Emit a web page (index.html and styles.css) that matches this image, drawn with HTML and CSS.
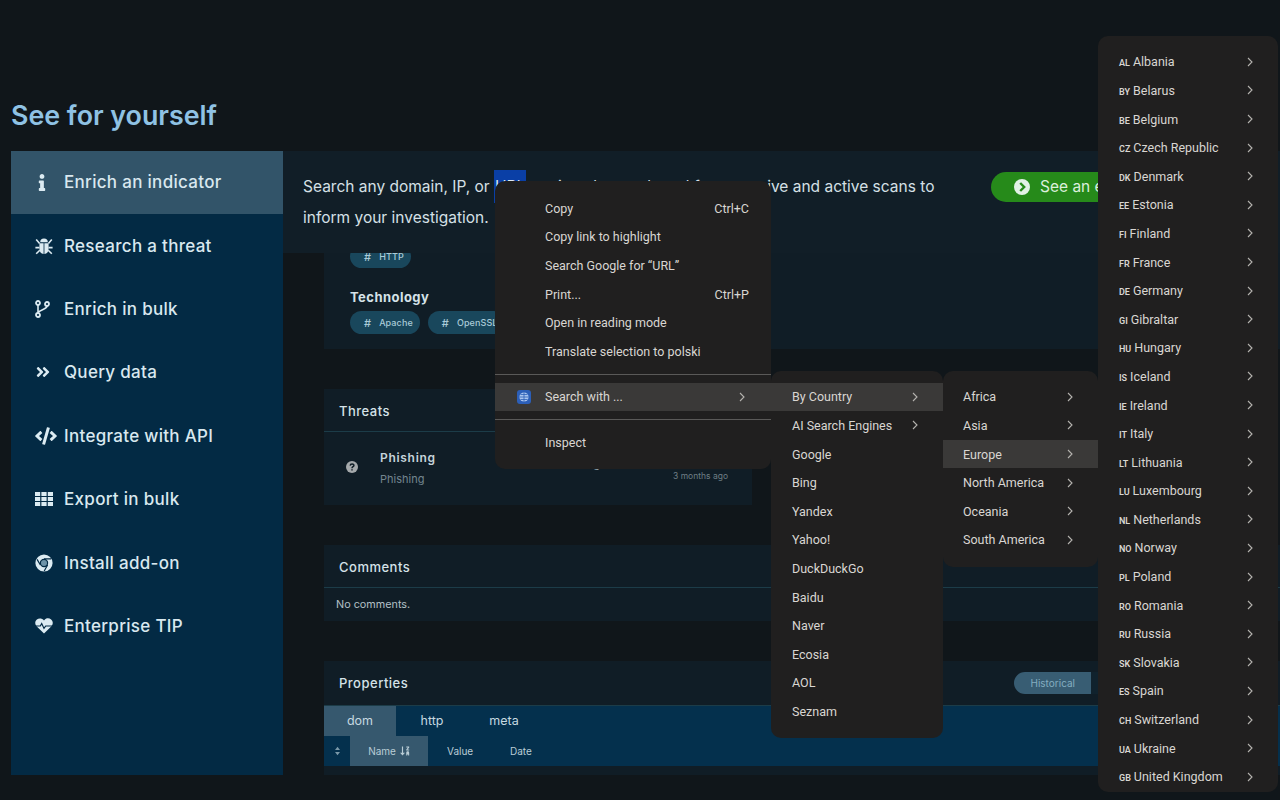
FILE: index.html
```html
<!DOCTYPE html>
<html lang="en">
<head>
  <meta charset="UTF-8">
  <meta name="viewport" content="width=device-width, initial-scale=1.0">
  <title>See for yourself</title>
  <link rel="stylesheet" href="styles.css">
</head>
<body>
  <div class="page">
    <h1 class="page-title">See for yourself</h1>

    <div class="explore">
      <nav class="side-nav">
        <a class="side-item active">
          <span class="side-icon"><svg class="ic-info" viewBox="0 0 192 512"><path d="M20 424.2h20V279.8H20c-11 0-20-9-20-20V212c0-11 9-20 20-20h112c11 0 20 9 20 20v212.2h20c11 0 20 9 20 20V492c0 11-9 20-20 20H20c-11 0-20-9-20-20v-47.8c0-11 9-20 20-20zM96 0C56.2 0 24 32.2 24 72s32.2 72 72 72 72-32.2 72-72S135.8 0 96 0z"/></svg></span>
          Enrich an indicator
        </a>
        <a class="side-item">
          <span class="side-icon"><svg class="ic-wide" viewBox="0 0 18 18"><path d="M5.2 5.2a3.8 3.6 0 0 1 7.6 0z"/><path d="M4.4 6.2h4.2V17C6 16.8 4.4 14.6 4.4 12zM9.4 6.2h4.2V12c0 2.6-1.6 4.8-4.2 5z"/><path class="ic-line" d="M1.2 2.6l3.4 4M16.8 2.6l-3.4 4M.4 10.6h4M17.6 10.6h-4M1.2 16.8l3.6-3.6M16.8 16.8l-3.6-3.6"/></svg></span>
          Research a threat
        </a>
        <a class="side-item">
          <span class="side-icon"><svg class="ic-branch" viewBox="0 0 15 18"><circle class="ic-ring" cx="3" cy="3" r="2"/><circle class="ic-ring" cx="3" cy="15" r="2"/><circle class="ic-ring" cx="12" cy="4" r="2"/><path class="ic-line" d="M3 5v8M12 6c0 3.4-6.4 3-9 6.5"/></svg></span>
          Enrich in bulk
        </a>
        <a class="side-item">
          <span class="side-icon"><svg class="ic-angles" viewBox="0 0 448 512"><path d="M224.3 273l-136 136c-9.4 9.4-24.6 9.4-33.9 0l-22.6-22.6c-9.4-9.4-9.4-24.6 0-33.9l96.4-96.4-96.4-96.4c-9.4-9.4-9.4-24.6 0-33.9L54.3 103c9.4-9.4 24.6-9.4 33.9 0l136 136c9.5 9.4 9.5 24.6.1 34zm192-34l-136-136c-9.4-9.4-24.6-9.4-33.9 0l-22.6 22.6c-9.4 9.4-9.4 24.6 0 33.9l96.4 96.4-96.4 96.4c-9.4 9.4-9.4 24.6 0 33.9l22.6 22.6c9.4 9.4 24.6 9.4 33.9 0l136-136c9.4-9.2 9.4-24.4 0-33.8z"/></svg></span>
          Query data
        </a>
        <a class="side-item">
          <span class="side-icon"><svg class="ic-code" viewBox="0 0 640 512"><path d="M278.9 511.5l-61-17.7c-6.4-1.8-10-8.5-8.2-14.9L346.2 8.7c1.8-6.4 8.5-10 14.9-8.2l61 17.7c6.4 1.8 10 8.5 8.2 14.9L293.8 503.3c-1.9 6.4-8.5 10.1-14.9 8.2zm-114-112.2l43.5-46.4c4.6-4.9 4.3-12.7-.8-17.2L117 256l90.6-79.7c5.1-4.5 5.5-12.3.8-17.2l-43.5-46.4c-4.5-4.8-12.1-5.1-17-.5L3.8 247.2c-5.1 4.7-5.1 12.8 0 17.5l144.1 135.1c4.9 4.6 12.5 4.4 17-.5zm327.2.6l144.1-135.1c5.1-4.7 5.1-12.8 0-17.5L492.1 112.1c-4.8-4.5-12.4-4.3-17 .5L431.6 159c-4.6 4.9-4.3 12.7.8 17.2L523 256l-90.6 79.7c-5.1 4.5-5.5 12.3-.8 17.2l43.5 46.4c4.5 4.9 12.1 5.1 17 .6z"/></svg></span>
          Integrate with API
        </a>
        <a class="side-item">
          <span class="side-icon"><svg class="ic-wide" viewBox="0 0 18 14"><path d="M0 0h5.2v4H0zM6.4 0h5.2v4H6.4zM12.8 0H18v4h-5.2zM0 5h5.2v4H0zM6.4 5h5.2v4H6.4zM12.8 5H18v4h-5.2zM0 10h5.2v4H0zM6.4 10h5.2v4H6.4zM12.8 10H18v4h-5.2z"/></svg></span>
          Export in bulk
        </a>
        <a class="side-item">
          <span class="side-icon"><svg class="ic-wide" viewBox="0 0 18 18"><circle cx="9" cy="9" r="8.6"/><circle class="ic-cut" cx="9" cy="9" r="3.6"/><path class="ic-cut" d="M9 4.9h7M5.4 11l-3.3-5.6M12.6 11l-3.4 6"/></svg></span>
          Install add-on
        </a>
        <a class="side-item">
          <span class="side-icon"><svg class="ic-wide" viewBox="0 0 18 16"><path d="M9 15.6L1.8 8.6C-.4 6.3-.2 3 1.900 1.400 4 -.2 7 .1 9 2.400 11-.1 14-.2 16.100 1.400c2.100 1.600 2.300 4.900.1 7.200z"/><path class="ic-cut" d="M0 8h5.300l1.400-2.400 2.300 4.800 1.700-2.400H18"/></svg></span>
          Enterprise TIP
        </a>
      </nav>

      <div class="explore-body">
        <div class="intro">
          <p class="intro-text">Search any domain, IP, or <span class="selected">URL</span> to view data gathered from passive and active scans to<br>inform your investigation.</p>
          <a class="cta">
            <svg class="cta-icon" viewBox="0 0 16 16"><circle cx="8" cy="8" r="8"/><path class="cta-mark" d="M6.200 4l4 4-4 4"/></svg>
            <span>See an example</span>
          </a>
        </div>

        <div class="preview">
          <section class="card card-tags">
            <div class="chips chips-cut"><span class="chip"><i>#</i>HTTP</span></div>
            <h3 class="tag-heading">Technology</h3>
            <div class="chips"><span class="chip"><i>#</i>Apache</span><span class="chip"><i>#</i>OpenSSL</span></div>
          </section>

          <section class="card card-threats">
            <h2 class="card-title">Threats</h2>
            <div class="threat-row">
              <svg class="threat-icon" viewBox="0 0 12 12"><circle cx="6" cy="6" r="6"/><path class="threat-mark" d="M4.200 4.600C4.300 2.400 8 2.500 7.900 4.500 7.900 5.800 6 5.700 6 7.200M6 8.300v1.300"/></svg>
              <div class="threat-text">
                <div class="threat-name">Phishing</div>
                <div class="threat-sub">Phishing</div>
              </div>
              <span class="threat-mid">Phishing</span>
              <span class="threat-time">3 months ago</span>
            </div>
          </section>

          <section class="card card-comments">
            <h2 class="card-title">Comments</h2>
            <p class="no-comments">No comments.</p>
          </section>

          <section class="card card-props">
            <div class="props-head">
              <h2 class="card-title">Properties</h2>
              <div class="toggle"><span class="toggle-on">Historical</span><span class="toggle-off"></span></div>
            </div>
            <div class="props-tabs">
              <span class="props-tab active">dom</span>
              <span class="props-tab">http</span>
              <span class="props-tab">meta</span>
            </div>
            <div class="props-cols">
              <span class="col-sort"><svg viewBox="0 0 8 12"><path d="M4 1l3 3.800H1zM4 11L1 7.200h6z"/></svg></span>
              <span class="col col-name active">Name
                <svg class="az" viewBox="0 0 12 11"><path d="M2.300 0h1.400v7.500H6L3 11 0 7.500h2.300z"/><path d="M7.500 0h3.500v1.500L9 3.600h2V5H7.500V3.600L9.500 1.400h-2zM7.500 11V7.500C7.500 5.400 11 5.400 11 7.500V11H9.800V9.800H8.700V11z"/></svg>
              </span>
              <span class="col col-value">Value</span>
              <span class="col col-date">Date</span>
            </div>
          </section>
        </div>
      </div>
    </div>
  </div>

  <!-- right click menu and its open submenus -->
  <div class="menu menu-main">
    <div class="menu-row"><span>Copy</span><kbd>Ctrl+C</kbd></div>
    <div class="menu-row"><span>Copy link to highlight</span></div>
    <div class="menu-row"><span>Search Google for “URL”</span></div>
    <div class="menu-row"><span>Print...</span><kbd>Ctrl+P</kbd></div>
    <div class="menu-row"><span>Open in reading mode</span></div>
    <div class="menu-row"><span>Translate selection to polski</span></div>
    <hr class="menu-sep">
    <div class="menu-row open">
      <svg class="ext-icon" viewBox="0 0 14 14"><rect width="14" height="14" rx="3"/><circle class="ext-globe" cx="7" cy="7" r="4.600"/><path class="ext-line" d="M2.400 7h9.200M7 2.400v9.200M3.500 4.500h7M3.500 9.500h7"/></svg>
      <span>Search with ...</span><svg class="chev" viewBox="0 0 6 10"><path d="M1 1l4 4-4 4"/></svg>
    </div>
    <hr class="menu-sep">
    <div class="menu-row"><span>Inspect</span></div>
  </div>

  <div class="menu menu-search">
    <div class="menu-row open"><span>By Country</span><svg class="chev" viewBox="0 0 6 10"><path d="M1 1l4 4-4 4"/></svg></div>
    <div class="menu-row"><span>AI Search Engines</span><svg class="chev" viewBox="0 0 6 10"><path d="M1 1l4 4-4 4"/></svg></div>
    <div class="menu-row"><span>Google</span></div>
    <div class="menu-row"><span>Bing</span></div>
    <div class="menu-row"><span>Yandex</span></div>
    <div class="menu-row"><span>Yahoo!</span></div>
    <div class="menu-row"><span>DuckDuckGo</span></div>
    <div class="menu-row"><span>Baidu</span></div>
    <div class="menu-row"><span>Naver</span></div>
    <div class="menu-row"><span>Ecosia</span></div>
    <div class="menu-row"><span>AOL</span></div>
    <div class="menu-row"><span>Seznam</span></div>
  </div>

  <div class="menu menu-regions">
    <div class="menu-row"><span>Africa</span><svg class="chev" viewBox="0 0 6 10"><path d="M1 1l4 4-4 4"/></svg></div>
    <div class="menu-row"><span>Asia</span><svg class="chev" viewBox="0 0 6 10"><path d="M1 1l4 4-4 4"/></svg></div>
    <div class="menu-row open"><span>Europe</span><svg class="chev" viewBox="0 0 6 10"><path d="M1 1l4 4-4 4"/></svg></div>
    <div class="menu-row"><span>North America</span><svg class="chev" viewBox="0 0 6 10"><path d="M1 1l4 4-4 4"/></svg></div>
    <div class="menu-row"><span>Oceania</span><svg class="chev" viewBox="0 0 6 10"><path d="M1 1l4 4-4 4"/></svg></div>
    <div class="menu-row"><span>South America</span><svg class="chev" viewBox="0 0 6 10"><path d="M1 1l4 4-4 4"/></svg></div>
  </div>

  <div class="menu menu-countries">
    <div class="menu-row"><span><b>AL</b>Albania</span><svg class="chev" viewBox="0 0 6 10"><path d="M1 1l4 4-4 4"/></svg></div>
    <div class="menu-row"><span><b>BY</b>Belarus</span><svg class="chev" viewBox="0 0 6 10"><path d="M1 1l4 4-4 4"/></svg></div>
    <div class="menu-row"><span><b>BE</b>Belgium</span><svg class="chev" viewBox="0 0 6 10"><path d="M1 1l4 4-4 4"/></svg></div>
    <div class="menu-row"><span><b>CZ</b>Czech Republic</span><svg class="chev" viewBox="0 0 6 10"><path d="M1 1l4 4-4 4"/></svg></div>
    <div class="menu-row"><span><b>DK</b>Denmark</span><svg class="chev" viewBox="0 0 6 10"><path d="M1 1l4 4-4 4"/></svg></div>
    <div class="menu-row"><span><b>EE</b>Estonia</span><svg class="chev" viewBox="0 0 6 10"><path d="M1 1l4 4-4 4"/></svg></div>
    <div class="menu-row"><span><b>FI</b>Finland</span><svg class="chev" viewBox="0 0 6 10"><path d="M1 1l4 4-4 4"/></svg></div>
    <div class="menu-row"><span><b>FR</b>France</span><svg class="chev" viewBox="0 0 6 10"><path d="M1 1l4 4-4 4"/></svg></div>
    <div class="menu-row"><span><b>DE</b>Germany</span><svg class="chev" viewBox="0 0 6 10"><path d="M1 1l4 4-4 4"/></svg></div>
    <div class="menu-row"><span><b>GI</b>Gibraltar</span><svg class="chev" viewBox="0 0 6 10"><path d="M1 1l4 4-4 4"/></svg></div>
    <div class="menu-row"><span><b>HU</b>Hungary</span><svg class="chev" viewBox="0 0 6 10"><path d="M1 1l4 4-4 4"/></svg></div>
    <div class="menu-row"><span><b>IS</b>Iceland</span><svg class="chev" viewBox="0 0 6 10"><path d="M1 1l4 4-4 4"/></svg></div>
    <div class="menu-row"><span><b>IE</b>Ireland</span><svg class="chev" viewBox="0 0 6 10"><path d="M1 1l4 4-4 4"/></svg></div>
    <div class="menu-row"><span><b>IT</b>Italy</span><svg class="chev" viewBox="0 0 6 10"><path d="M1 1l4 4-4 4"/></svg></div>
    <div class="menu-row"><span><b>LT</b>Lithuania</span><svg class="chev" viewBox="0 0 6 10"><path d="M1 1l4 4-4 4"/></svg></div>
    <div class="menu-row"><span><b>LU</b>Luxembourg</span><svg class="chev" viewBox="0 0 6 10"><path d="M1 1l4 4-4 4"/></svg></div>
    <div class="menu-row"><span><b>NL</b>Netherlands</span><svg class="chev" viewBox="0 0 6 10"><path d="M1 1l4 4-4 4"/></svg></div>
    <div class="menu-row"><span><b>NO</b>Norway</span><svg class="chev" viewBox="0 0 6 10"><path d="M1 1l4 4-4 4"/></svg></div>
    <div class="menu-row"><span><b>PL</b>Poland</span><svg class="chev" viewBox="0 0 6 10"><path d="M1 1l4 4-4 4"/></svg></div>
    <div class="menu-row"><span><b>RO</b>Romania</span><svg class="chev" viewBox="0 0 6 10"><path d="M1 1l4 4-4 4"/></svg></div>
    <div class="menu-row"><span><b>RU</b>Russia</span><svg class="chev" viewBox="0 0 6 10"><path d="M1 1l4 4-4 4"/></svg></div>
    <div class="menu-row"><span><b>SK</b>Slovakia</span><svg class="chev" viewBox="0 0 6 10"><path d="M1 1l4 4-4 4"/></svg></div>
    <div class="menu-row"><span><b>ES</b>Spain</span><svg class="chev" viewBox="0 0 6 10"><path d="M1 1l4 4-4 4"/></svg></div>
    <div class="menu-row"><span><b>CH</b>Switzerland</span><svg class="chev" viewBox="0 0 6 10"><path d="M1 1l4 4-4 4"/></svg></div>
    <div class="menu-row"><span><b>UA</b>Ukraine</span><svg class="chev" viewBox="0 0 6 10"><path d="M1 1l4 4-4 4"/></svg></div>
    <div class="menu-row"><span><b>GB</b>United Kingdom</span><svg class="chev" viewBox="0 0 6 10"><path d="M1 1l4 4-4 4"/></svg></div>
  </div>
</body>
</html>
```

FILE: styles.css
```css
html, body {
  height: 100%;
}

body {
  margin: 0;
  background: #10161a;
  color: #dfe9ee;
  font-family: Inter, "Noto Sans", sans-serif;
  overflow: hidden;
}

.page {
  height: 800px;
  padding: 99px 0 0 11px;
  box-sizing: border-box;
  overflow: hidden;
}

.page-title {
  margin: 0 0 20px;
  font-size: 26.8px;
  line-height: 32px;
  font-weight: 600;
  color: #8fc2e4;
}

.explore {
  display: flex;
  height: 624px;
}

/* left nav */
.side-nav {
  width: 272px;
  flex-shrink: 0;
  background: #032a44;
}

.side-item {
  display: flex;
  align-items: center;
  height: 63.4px;
  padding: 0 0 1px 24px;
  box-sizing: border-box;
  font-size: 17px;
  font-weight: 500;
  letter-spacing: 0.3px;
  color: #d9e8ef;
}

.side-item.active {
  background: #325469;
}

.side-icon {
  display: flex;
  align-items: center;
  width: 29px;
  flex-shrink: 0;
}

.side-icon svg {
  fill: #dcebf2;
  display: block;
}

.ic-info {
  width: 8px;
  height: 17px;
  margin-left: 3px;
}

.ic-wide {
  width: 18px;
  height: 18px;
}

.ic-branch {
  width: 15px;
  height: 18px;
}

.ic-angles {
  width: 14px;
  height: 16px;
  margin-left: 1px;
}

.ic-code {
  width: 22px;
  height: 18px;
}

.ic-line {
  fill: none;
  stroke: #dcebf2;
  stroke-width: 1.6;
}

.side-icon .ic-ring {
  fill: none;
  stroke: #dcebf2;
  stroke-width: 1.8;
}

.side-icon .ic-cut {
  fill: #6d93a8;
  stroke: #032a44;
  stroke-width: 1.2;
}

.side-icon path.ic-cut {
  fill: none;
}

/* main area */
.explore-body {
  flex: 1;
  min-width: 0;
}

.intro {
  display: flex;
  align-items: flex-start;
  height: 102px;
  padding: 20px 0 0 20px;
  box-sizing: border-box;
  background: #111e27;
}

.intro-text {
  width: 640px;
  margin: 0;
  font-size: 15.5px;
  line-height: 31px;
  color: #d5e0e6;
  white-space: nowrap;
}

.selected {
  padding: 7px 1px;
  background: #0a3fa6;
  color: #dfe9ee;
}

.cta {
  display: flex;
  align-items: center;
  gap: 10px;
  height: 30px;
  margin: 1px 0 0 48px;
  padding: 0 22px 1px 23px;
  box-sizing: border-box;
  border-radius: 15px;
  background: #268a1a;
  color: #dcefdc;
  font-size: 15.5px;
  white-space: nowrap;
}

.cta-icon {
  width: 16px;
  height: 16px;
  fill: #e2f1e6;
}

.cta-mark {
  fill: none;
  stroke: #268a1a;
  stroke-width: 2.4;
}

.preview {
  height: 522px;
  padding-left: 41px;
  overflow: hidden;
}

.card {
  display: flow-root;
  background: #101d26;
  margin-bottom: 40px;
}

.card-tags {
  height: 96px;
  padding-left: 26px;
  box-sizing: border-box;
}

.chips {
  display: flex;
  gap: 8px;
}

.chips-cut {
  margin-top: -8px;
}

.chip {
  display: flex;
  align-items: center;
  height: 23px;
  padding: 0 7px 0 10px;
  border-radius: 12px;
  background: #19475c;
  color: #a9cbd8;
  font-size: 9px;
  letter-spacing: 0.1px;
  font-weight: 500;
}

.chip i {
  font-style: normal;
  margin: 0 8px 0 4px;
  font-size: 11px;
}

.tag-heading {
  margin: 21px 0 6px;
  font-size: 13px;
  line-height: 16px;
  font-weight: 700;
  letter-spacing: 0.45px;
  color: #d5e2e8;
}

.card-title {
  margin: 0;
  font-size: 13px;
  line-height: 16px;
  font-weight: 500;
  letter-spacing: 0.5px;
  color: #d5e2e8;
}

.card-threats {
  width: 428px;
  height: 116px;
}

.card-threats .card-title,
.card-comments .card-title {
  height: 43px;
  padding: 14px 0 0 15px;
  box-sizing: border-box;
  border-bottom: 1px solid #1c3c48;
}

.threat-row {
  display: flex;
  align-items: center;
  height: 72px;
  padding: 0 24px 0 22px;
  box-sizing: border-box;
}

.threat-icon {
  width: 12px;
  height: 12px;
  fill: #a5a9ab;
  margin: -3px 0 0 0;
}

.threat-mark {
  fill: none;
  stroke: #101d26;
  stroke-width: 1.5;
}

.threat-text {
  width: 226px;
  margin-left: 22px;
}

.threat-name {
  font-size: 12px;
  font-weight: 600;
  line-height: 16px;
  letter-spacing: 0.7px;
  margin-bottom: 6px;
  color: #c5d3da;
}

.threat-sub {
  font-size: 11px;
  line-height: 14px;
  color: #73858f;
}

.threat-mid {
  margin: -8px 0 0 -16px;
  font-size: 11px;
  width: 10px;
  overflow: hidden;
  direction: rtl;
  color: #9eabb2;
}

.threat-time {
  margin: 16px 0 0 auto;
  font-size: 8.5px;
  color: #6e7d85;
}

.card-comments {
  height: 76px;
}

.no-comments {
  margin: 0;
  padding: 9px 12px 0;
  font-size: 10.8px;
  line-height: 16px;
  color: #b3c0c6;
}

.card-props {
  height: 114px;
  margin-bottom: 0;
}

.props-head {
  display: flex;
  align-items: center;
  height: 45px;
  padding: 0 0 1px 15px;
  box-sizing: border-box;
  border-bottom: 1px solid #1c3c48;
}

.toggle {
  display: flex;
  margin-left: 606px;
  font-size: 10px;
}

.toggle-on {
  display: flex;
  align-items: center;
  width: 77px;
  height: 22px;
  justify-content: center;
  border-radius: 11px 0 0 11px;
  background: #385d73;
  color: #83adc0;
}

.toggle-off {
  width: 60px;
  height: 22px;
  background: #10222d;
}

.props-tabs {
  display: flex;
  height: 30px;
  background: #04304d;
  font-size: 12.5px;
  color: #c6d8e0;
}

.props-tab {
  display: flex;
  align-items: center;
  justify-content: center;
  width: 72px;
  padding-bottom: 2px;
  box-sizing: border-box;
}

.props-tab.active {
  background: #36586e;
}

.props-cols {
  display: flex;
  height: 30px;
  background: #04304d;
  font-size: 10px;
  color: #bacdd6;
}

.col-sort {
  display: flex;
  align-items: center;
  justify-content: center;
  width: 26px;
}

.col-sort svg {
  width: 7px;
  height: 10px;
  fill: #7a98a8;
}

.col {
  display: flex;
  align-items: center;
}

.col-name {
  width: 78px;
  justify-content: center;
  gap: 4px;
}

.col-name.active {
  background: #36586e;
}

.az {
  width: 10px;
  height: 10px;
  fill: #bacdd6;
}

.col-value {
  margin-left: 19px;
  width: 63px;
}

/* context menus */
.menu {
  position: absolute;
  box-sizing: border-box;
  padding-top: 11.6px;
  background: #201f1f;
  border-radius: 10px;
  font-family: Roboto, "Noto Sans", sans-serif;
  font-size: 12.5px;
  color: #d9d6d2;
}

.menu-main {
  left: 495px;
  top: 181px;
  width: 276px;
  height: 288px;
  padding-top: 13px;
}

.menu-search {
  left: 771px;
  top: 371px;
  width: 172px;
  height: 367px;
}

.menu-regions {
  left: 943px;
  top: 371px;
  width: 155px;
  height: 196px;
}

.menu-regions .menu-row {
  padding-left: 20px;
}

.menu-countries {
  left: 1098px;
  top: 36px;
  width: 180px;
  height: 756px;
}

.menu-row {
  display: flex;
  align-items: center;
  justify-content: space-between;
  height: 28.6px;
  padding: 0 25px 0 21px;
}

.menu-main .menu-row {
  padding: 0 22px 0 50px;
  position: relative;
}

.menu-row.open {
  background: #3a3938;
}

.menu-row b {
  font-size: 9px;
  font-weight: 600;
  margin-right: 3px;
}

kbd {
  font: inherit;
}

.chev {
  width: 6px;
  height: 10px;
  fill: none;
  stroke: #b5b3af;
  stroke-width: 1.1;
}

.menu-main .chev {
  margin-right: 4px;
}

.menu-sep {
  height: 1px;
  margin: 8px 0;
  border: 0;
  background: #5a5958;
}

.ext-icon {
  position: absolute;
  left: 22px;
  top: 7px;
  width: 14px;
  height: 14px;
  fill: #2c5fb8;
}

.ext-globe {
  fill: #a9c4ee;
}

.ext-line {
  fill: none;
  stroke: #2c5fb8;
  stroke-width: 0.8;
}
```
